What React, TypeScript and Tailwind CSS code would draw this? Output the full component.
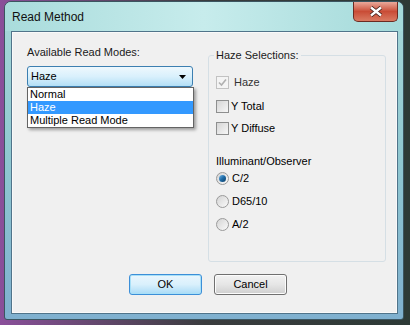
import React from "react";

const FONT = { fontFamily: '"Liberation Sans", Arial, sans-serif' };

function CheckBox({ checked, disabled }: { checked?: boolean; disabled?: boolean }) {
  return (
    <div
      className={
        "w-[13px] h-[13px] border flex items-center justify-center " +
        (disabled ? "border-[#c2c2c2] bg-[#f4f4f4]" : "border-[#8e8f8f] bg-gradient-to-br from-[#d6d6d6] to-[#f7f7f7]")
      }
    >
      {checked && (
        <svg width="9" height="9" viewBox="0 0 9 9">
          <path d="M1 4.5 L3.5 7 L8 1.5" fill="none" stroke="#b0b0b0" strokeWidth="1.6" />
        </svg>
      )}
    </div>
  );
}

function Radio({ checked }: { checked?: boolean }) {
  return (
    <div className="w-[13px] h-[13px] rounded-full border border-[#9a9a9a] bg-gradient-to-br from-[#d4d4d4] to-[#fafafa] flex items-center justify-center">
      {checked && (
        <div className="w-[7px] h-[7px] rounded-full bg-gradient-to-br from-[#6fb6e6] via-[#1d6aa6] to-[#0f3f66]" />
      )}
    </div>
  );
}

export default function App() {
  return (
    <div className="w-[410px] h-[325px] overflow-hidden bg-gradient-to-r from-[#8a4f9a] via-[#3a3c3e] to-[#2d3a36] pt-[1px] pl-[4px]" style={FONT}>
      {/* Window */}
      <div className="w-[400px] h-[319px] rounded-t-[7px] rounded-b-[3px] border border-[#3b5560] bg-gradient-to-b from-[#a8d9d9] via-[#8fc7d0] to-[#7fb0cf] flex flex-col">
        {/* Title bar */}
        <div className="h-[29px] flex items-start justify-between bg-gradient-to-r from-[#a9dcdc] via-[#c7ecec] to-[#a4dada] rounded-t-[6px]">
          <div className="pl-[7px] pt-[8px] text-[12px] leading-[15px] text-[#111]">Read Method</div>
          <div className="mr-[5px] w-[45px] h-[20px] rounded-b-[5px] border border-t-0 border-[#6b2b22] bg-gradient-to-b from-[#e9a99b] via-[#c94c36] to-[#d97a62] flex items-center justify-center">
            <svg width="14" height="11" viewBox="0 0 14 11">
              <path d="M2 1.5 L12 9.5 M12 1.5 L2 9.5" stroke="#3a1a14" strokeWidth="4" />
              <path d="M2 1.5 L12 9.5 M12 1.5 L2 9.5" stroke="#ffffff" strokeWidth="2.4" />
            </svg>
          </div>
        </div>

        {/* Client */}
        <div className="ml-[6px] mr-[5px] h-[283px] border border-[#50748a] bg-[#f0f0f0] text-[11px] leading-[13px] text-black">
          <div className="h-[281px] border border-[#ffffff]/60 pt-[13px] pl-[14px]">
            <div className="flex">
              {/* Left column */}
              <div className="w-[166px]">
                <div className="h-[13px] text-[#1a1a1a]">Available Read Modes:</div>
                <div className="relative mt-[7px]">
                  <div className="h-[21px] rounded-[3px] border border-[#3c7fb1] bg-gradient-to-b from-[#eef8fd] via-[#d9f0fc] to-[#b3dff6] flex items-center justify-between pl-[3px] pr-[6px]">
                    <span>Haze</span>
                    <svg width="7" height="4" viewBox="0 0 7 4">
                      <path d="M0 0 H7 L3.5 4 Z" fill="#000" />
                    </svg>
                  </div>
                  {/* Dropdown list */}
                  <div className="absolute left-0 top-[21px] w-[167px] h-[41px] bg-white border border-[#646464] shadow-[2px_2px_3px_rgba(0,0,0,0.35)]">
                    <div className="h-[13px] pl-[2px]">Normal</div>
                    <div className="h-[13px] pl-[2px] bg-[#3399ff] text-white">Haze</div>
                    <div className="h-[13px] pl-[2px]">Multiple Read Mode</div>
                  </div>
                </div>
              </div>

              {/* Haze selections group */}
              <div className="relative ml-[15px] mt-[9px] w-[178px] h-[207px] rounded-[3px] border border-[#d5dfe5] pl-[7px] pt-[20px]">
                <div className="absolute -top-[7px] left-[5px] bg-[#f0f0f0] px-[2px] h-[13px] text-[#1a1a1a]">Haze Selections:</div>
                <div className="flex items-center h-[13px]">
                  <CheckBox checked disabled />
                  <span className="ml-[5px] text-[#333]">Haze</span>
                </div>
                <div className="flex items-center h-[13px] mt-[11px]">
                  <CheckBox />
                  <span className="ml-[2px]">Y Total</span>
                </div>
                <div className="flex items-center h-[13px] mt-[9px]">
                  <CheckBox />
                  <span className="ml-[2px]">Y Diffuse</span>
                </div>
                <div className="h-[13px] mt-[20px]">Illuminant/Observer</div>
                <div className="flex items-center h-[13px] mt-[4px]">
                  <Radio checked />
                  <span className="ml-[3px]">C/2</span>
                </div>
                <div className="flex items-center h-[13px] mt-[10px]">
                  <Radio />
                  <span className="ml-[3px]">D65/10</span>
                </div>
                <div className="flex items-center h-[13px] mt-[10px]">
                  <Radio />
                  <span className="ml-[3px]">A/2</span>
                </div>
              </div>
            </div>

            {/* Buttons */}
            <div className="flex gap-[12px] pl-[102px] mt-[12px]">
              <div className="w-[73px] h-[21px] rounded-[3px] border border-[#3c8fd8] shadow-[inset_0_0_0_1px_#a8e0f8] bg-gradient-to-b from-[#eaf6fd] via-[#d9f0fc] to-[#a9dbf6] flex items-center justify-center">
                OK
              </div>
              <div className="w-[73px] h-[21px] rounded-[3px] border border-[#707070] shadow-[inset_0_0_0_1px_#fcfcfc] bg-gradient-to-b from-[#f2f2f2] via-[#e6e6e6] to-[#cfcfcf] flex items-center justify-center">
                Cancel
              </div>
            </div>
          </div>
        </div>
      </div>
    </div>
  );
}
